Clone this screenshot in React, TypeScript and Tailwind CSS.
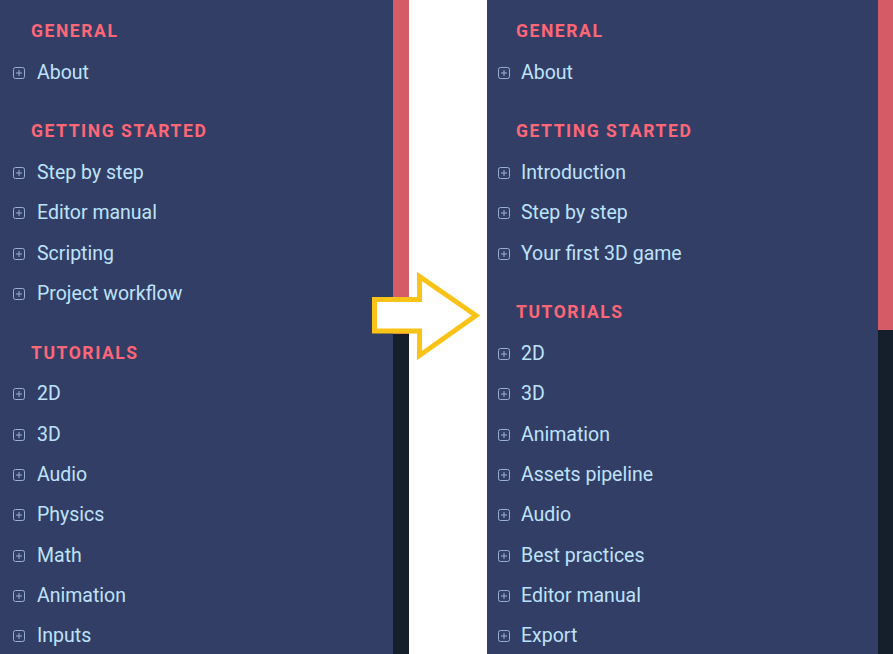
const leftNav = [
  { title: "General", items: ["About"] },
  {
    title: "Getting started",
    items: ["Step by step", "Editor manual", "Scripting", "Project workflow"],
  },
  {
    title: "Tutorials",
    items: ["2D", "3D", "Audio", "Physics", "Math", "Animation", "Inputs"],
  },
];

const rightNav = [
  { title: "General", items: ["About"] },
  {
    title: "Getting started",
    items: ["Introduction", "Step by step", "Your first 3D game"],
  },
  {
    title: "Tutorials",
    items: [
      "2D",
      "3D",
      "Animation",
      "Assets pipeline",
      "Audio",
      "Best practices",
      "Editor manual",
      "Export",
    ],
  },
];

function PlusBox() {
  return (
    <svg width="12" height="12" viewBox="0 0 12 12" className="shrink-0">
      <rect x="0.5" y="0.5" width="11" height="11" rx="2" fill="none" stroke="#98b0d0" strokeWidth="1" />
      <path d="M6 3v6M3 6h6" stroke="#98b0d0" strokeWidth="1" />
    </svg>
  );
}

function Sidebar({ sections, shifted }: { sections: typeof leftNav; shifted?: boolean }) {
  return (
    <nav className="h-full overflow-hidden bg-[#333e66] pt-[9.5px]">
      {sections.map((section) => (
        <div key={section.title} className="mb-[17px]">
          <h3
            className={
              shifted
                ? "flex h-[43px] items-center pl-[29px] text-[17.5px] font-bold uppercase tracking-[0.09em] text-[#ff6676]"
                : "flex h-[43px] items-center pl-[31px] text-[17.5px] font-bold uppercase tracking-[0.09em] text-[#ff6676]"
            }
          >
            {section.title}
          </h3>
          {section.items.map((item) => (
            <div
              key={item}
              className={
                shifted
                  ? "flex h-[40.33px] items-center gap-[11px] pl-[11px]"
                  : "flex h-[40.33px] items-center gap-[12px] pl-[13px]"
              }
            >
              <PlusBox />
              <span className="whitespace-nowrap text-[19.5px] leading-[24px] text-[#bde3fb]">{item}</span>
            </div>
          ))}
        </div>
      ))}
    </nav>
  );
}

function Scrollbar({ thumb, width }: { thumb: string; width: string }) {
  return (
    <div className={`flex h-full shrink-0 flex-col bg-[#141f2b] ${width}`}>
      <div className={`bg-[#d55c67] ${thumb}`} />
    </div>
  );
}

export default function App() {
  return (
    <main
      className="relative flex h-[654px] w-[893px] overflow-hidden bg-white"
      style={{ fontFamily: "Roboto, 'Noto Sans', sans-serif" }}
    >
      <div className="w-[393px] shrink-0">
        <Sidebar sections={leftNav} />
      </div>
      <Scrollbar width="w-[16px]" thumb="h-[334px]" />
      <div className="w-[78px] shrink-0 bg-white" />
      <div className="w-[391px] shrink-0">
        <Sidebar sections={rightNav} shifted />
      </div>
      <Scrollbar width="w-[15px]" thumb="h-[330px]" />

      {/* arrow over the gap */}
      <svg className="pointer-events-none absolute left-0 top-0" width="893" height="654">
        <path
          d="M374.5 299.5 H419.5 V276.5 L476 315.5 L419.5 355.5 V331 H374.5 Z"
          fill="#fff"
          stroke="#fbc317"
          strokeWidth="5"
          strokeLinejoin="miter"
        />
      </svg>
    </main>
  );
}
